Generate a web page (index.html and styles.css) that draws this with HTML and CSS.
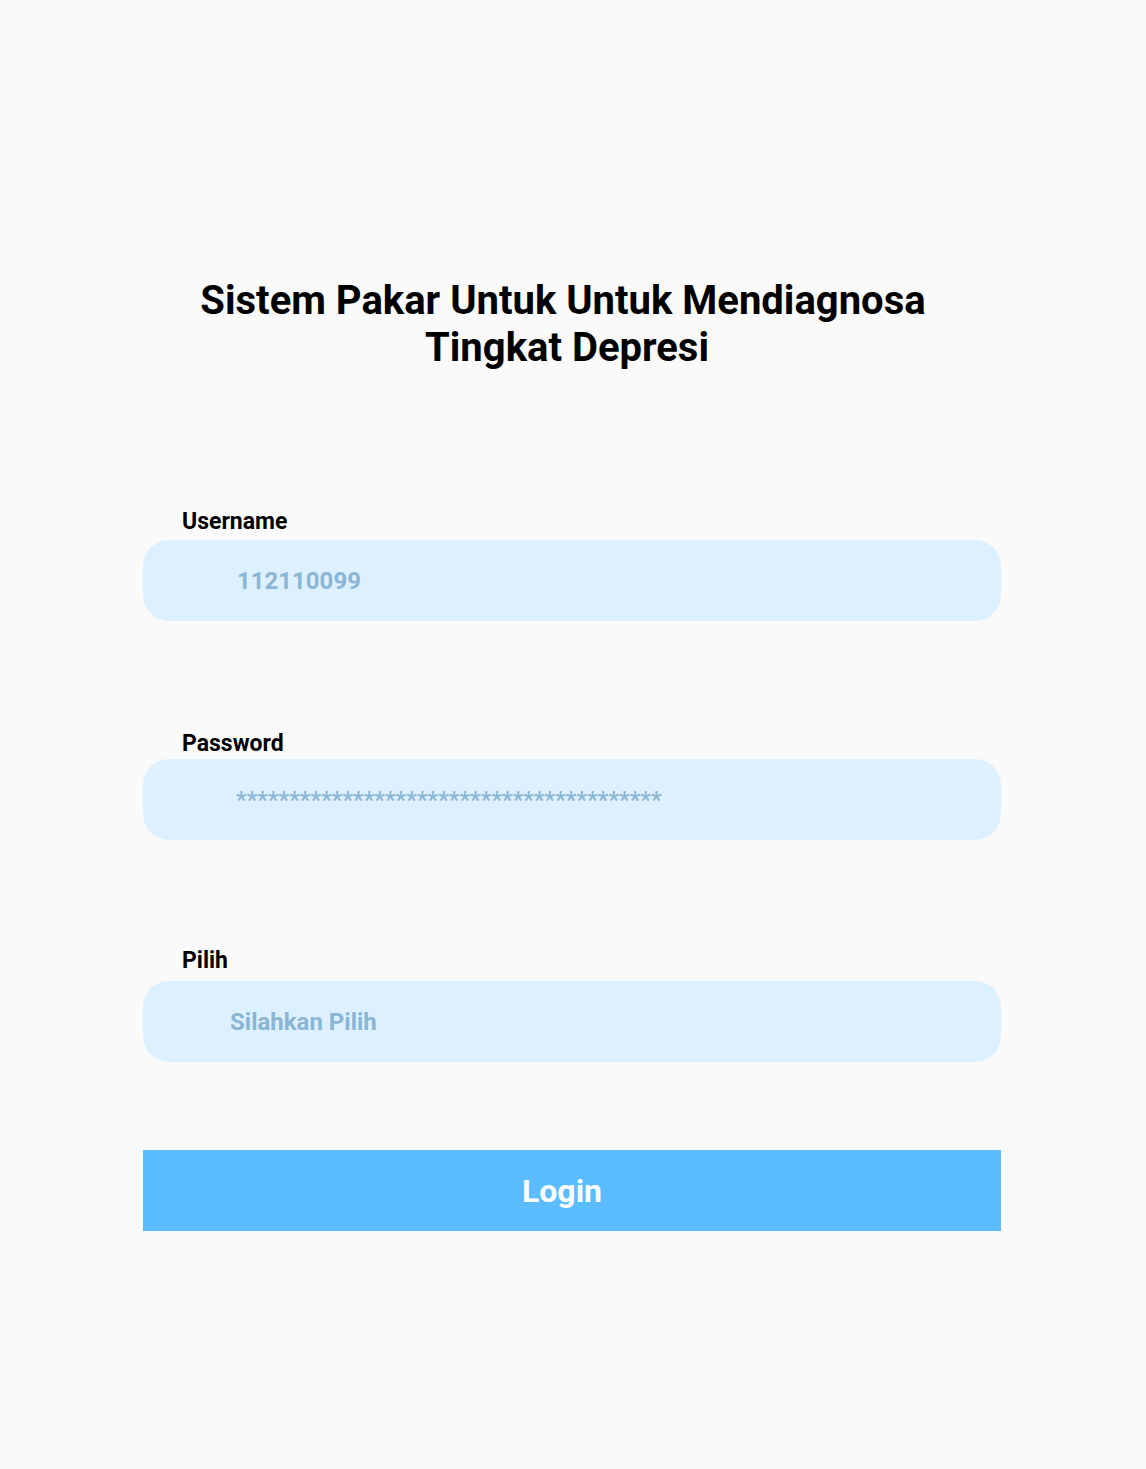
FILE: index.html
```html
<!DOCTYPE html>
<html lang="id">
<head>
<meta charset="utf-8">
<title>Login</title>
<link rel="stylesheet" href="styles.css">
</head>
<body>
<main class="page">
  <h1 class="title"><span class="title-line">Sistem Pakar Untuk Untuk Mendiagnosa</span><span class="title-line title-line-2">Tingkat Depresi</span></h1>
  <form class="form">
    <div class="field field-user">
      <label class="label">Username</label>
      <div class="input"><span class="value value-user">112110099</span></div>
    </div>
    <div class="field field-pass">
      <label class="label">Password</label>
      <div class="input"><span class="value value-pass">****************************************</span></div>
    </div>
    <div class="field field-pilih">
      <label class="label">Pilih</label>
      <div class="input"><span class="value value-pilih">Silahkan Pilih</span></div>
    </div>
    <button type="button" class="btn">Login</button>
  </form>
</main>
</body>
</html>
```

FILE: styles.css
```css
html, body {
  margin: 0;
  padding: 0;
  background: #fafafa;
  font-family: Roboto, "Liberation Sans", sans-serif;
}
.page {
  width: 1146px;
  height: 1469px;
  box-sizing: border-box;
  padding-top: 277px;
}
.title {
  margin: 0;
  font-size: 40px;
  font-weight: 700;
  line-height: 47px;
  text-align: center;
  color: #000;
  padding-right: 20px;
}
.title-line { display: block; }
.title-line-2 { padding-left: 8px; }
.form {
  margin: 0 0 0 143px;
  width: 858px;
  padding-top: 139px;
}
.label {
  display: block;
  font-size: 23px;
  font-weight: 700;
  color: #000;
  padding-left: 39px;
  line-height: 24px;
  margin-bottom: 8px;
}
.field-user .label { margin-bottom: 6px; }
.field-pass .label { margin-bottom: 3px; }
.input {
  height: 81px;
  border-radius: 26px;
  background: #dcf0ff;
  display: flex;
  align-items: center;
}
.value {
  color: #8bb5d4;
  font-size: 24px;
  font-weight: 700;
}
.value-user { padding-left: 94px; }
.value-pass { padding-left: 93px; font-weight: 500; font-size: 24px; }
.value-pilih { padding-left: 87px; }
.field-pass { margin-top: 111px; }
.field-pilih { margin-top: 109px; }
.btn {
  display: block;
  margin-top: 88px;
  width: 858px;
  height: 81px;
  border: 0;
  border-radius: 0;
  background: #5bbcff;
  color: #fff;
  font-family: Roboto, "Liberation Sans", sans-serif;
  font-size: 32px;
  font-weight: 700;
  padding: 0 20px 0 0;
}
```
